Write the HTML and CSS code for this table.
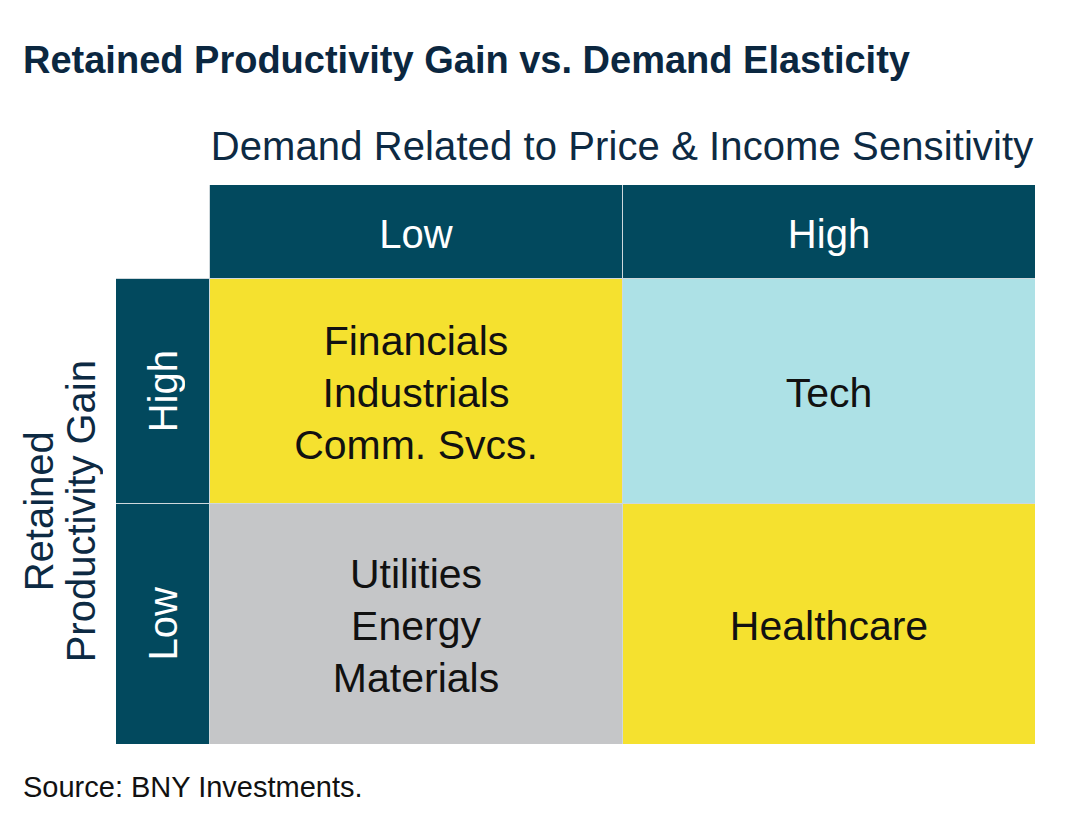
FILE: index.html
```html
<!DOCTYPE html>
<html lang="en">
<head>
<meta charset="utf-8">
<title>Retained Productivity Gain vs. Demand Elasticity</title>
<link rel="stylesheet" href="styles.css">
</head>
<body>
<div class="page">
  <h1 class="title">Retained Productivity Gain vs. Demand Elasticity</h1>
  <div class="x-axis">Demand Related to Price &amp; Income Sensitivity</div>
  <div class="chart">
    <div class="y-axis"><span>Retained<br>Productivity Gain</span></div>
    <div class="matrix">
      <div class="corner"></div>
      <div class="col-head">Low</div>
      <div class="col-head">High</div>
      <div class="row-head"><span>High</span></div>
      <div class="cell yellow">Financials<br>Industrials<br>Comm. Svcs.</div>
      <div class="cell blue">Tech</div>
      <div class="row-head"><span>Low</span></div>
      <div class="cell gray">Utilities<br>Energy<br>Materials</div>
      <div class="cell yellow">Healthcare</div>
    </div>
  </div>
  <p class="source">Source: BNY Investments.</p>
</div>
</body>
</html>
```

FILE: styles.css
```css
* { box-sizing: border-box; }

html, body {
  margin: 0;
  padding: 0;
  background: #ffffff;
}

body {
  font-family: "Liberation Sans", Arial, sans-serif;
  color: #0b2940;
}

.page {
  width: 1079px;
  height: 832px;
  padding-top: 41px;
}

.title {
  margin: 0 0 0 23px;
  font-size: 38px;
  line-height: 38px;
  font-weight: 700;
  color: #0b2740;
}

.x-axis {
  margin: 47px 0 0 209px;
  width: 826px;
  text-align: center;
  font-size: 40px;
  line-height: 40px;
  letter-spacing: 0.1px;
  color: #0d2a43;
}

.chart {
  display: flex;
  margin-top: 19px;
}

.y-axis {
  width: 116px;
  padding: 94px 0 0 18px;
  display: flex;
  align-items: center;
}

.y-axis span {
  writing-mode: vertical-rl;
  transform: rotate(180deg);
  text-align: center;
  font-size: 40px;
  line-height: 42px;
  color: #0d2a43;
}

.matrix {
  display: grid;
  grid-template-columns: 93px 412px 412px;
  grid-template-rows: 93px 224px 240px;
  gap: 1px;
  background: #cfd8dc;
}

.corner {
  background: #ffffff;
}

.col-head,
.row-head {
  background: #02495e;
  color: #ffffff;
  font-size: 40px;
  line-height: 40px;
  display: flex;
  align-items: center;
  justify-content: center;
}

.col-head {
  padding-top: 5px;
}

.row-head span {
  writing-mode: vertical-rl;
  transform: rotate(180deg);
}

.cell {
  display: flex;
  align-items: center;
  justify-content: center;
  text-align: center;
  font-size: 41px;
  line-height: 52px;
  color: #111111;
  padding-top: 4px;
}

.yellow { background: #f5e12f; }
.blue { background: #ade1e6; }
.gray { background: #c5c6c8; }

.source {
  margin: 29px 0 0 23px;
  font-size: 29px;
  line-height: 29px;
  color: #111111;
}
```
